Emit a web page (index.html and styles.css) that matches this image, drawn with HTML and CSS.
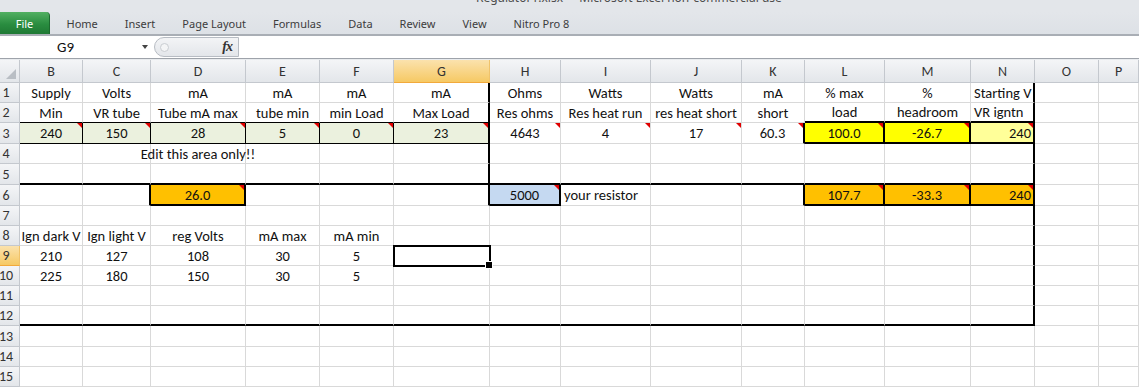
FILE: index.html
```html
<!DOCTYPE html>
<html lang="en">
<head>
  <meta charset="UTF-8" />
  <title>Regulator1.xlsx - Microsoft Excel non-commercial use</title>
  <link rel="stylesheet" href="styles.css">
</head>
<body>
  <div id="title-bar"><span>Regulator1.xlsx  -  Microsoft Excel non-commercial use</span></div>

  <div id="ribbon">
    <div class="tab file">File</div>
    <div class="tab first">Home</div>
    <div class="tab">Insert</div>
    <div class="tab">Page Layout</div>
    <div class="tab">Formulas</div>
    <div class="tab">Data</div>
    <div class="tab">Review</div>
    <div class="tab">View</div>
    <div class="tab">Nitro Pro 8</div>
  </div>

  <div id="formula-bar">
    <div class="name-box"><span>G9</span><span class="arrow"></span></div>
    <div class="fx-box"><span class="grip"></span><span class="fx">fx</span></div>
    <div class="formula"></div>
  </div>

  <div id="sheet">
    <!-- column headers -->
    <div class="corner"></div>
    <div class="ch">B</div><div class="ch">C</div><div class="ch">D</div><div class="ch">E</div>
    <div class="ch">F</div><div class="ch hl">G</div><div class="ch">H</div><div class="ch">I</div>
    <div class="ch">J</div><div class="ch">K</div><div class="ch">L</div><div class="ch">M</div>
    <div class="ch">N</div><div class="ch">O</div><div class="ch">P</div>

    <!-- row 1 -->
    <div class="rh">1</div>
    <div>Supply</div><div>Volts</div><div>mA</div><div>mA</div><div>mA</div><div class="tr">mA</div>
    <div>Ohms</div><div>Watts</div><div>Watts</div><div>mA</div><div>% max</div><div>%</div>
    <div class="tr left">Starting V</div><div></div><div></div>

    <!-- row 2 -->
    <div class="rh">2</div>
    <div class="kb">Min</div><div class="kb">VR tube</div><div class="kb">Tube mA max</div>
    <div class="kb">tube min</div><div class="kb">min Load</div><div class="kb tr">Max Load</div>
    <div>Res ohms</div><div>Res heat run</div><div>res heat short</div><div>short</div>
    <div class="tb">load</div><div class="tb">headroom</div><div class="tb tr left">VR igntn</div>
    <div></div><div></div>

    <!-- row 3 -->
    <div class="rh">3</div>
    <div class="green kb kr cm">240</div><div class="green kb kr cm">150</div>
    <div class="green kb kr cm">28</div><div class="green kb kr cm">5</div>
    <div class="green kb kr cm">0</div><div class="green kb tr cm">23</div>
    <div class="cm">4643</div><div class="cm">4</div><div class="cm">17</div><div class="tr cm">60.3</div>
    <div class="yellow tb tr cm">100.0</div><div class="yellow tb tr cm">-26.7</div>
    <div class="pale tb tr cm right">240</div><div></div><div></div>

    <!-- row 4 -->
    <div class="rh">4</div>
    <div></div><div></div><div>Edit this area only!!</div><div></div><div></div><div class="tr"></div>
    <div></div><div></div><div></div><div></div><div></div><div></div><div class="tr"></div>
    <div></div><div></div>

    <!-- row 5 -->
    <div class="rh">5</div>
    <div class="tb"></div><div class="tb"></div><div class="tb"></div><div class="tb"></div>
    <div class="tb"></div><div class="tb tr"></div><div class="tb"></div><div class="tb"></div>
    <div class="tb"></div><div class="tb"></div><div class="tb"></div><div class="tb"></div>
    <div class="tb tr"></div><div></div><div></div>

    <!-- row 6 -->
    <div class="rh">6</div>
    <div></div><div class="tr"></div><div class="orange tb tr cm">26.0</div><div></div><div></div>
    <div class="tr"></div><div class="blue tb tr cm">5000</div><div class="left">your resistor</div>
    <div></div><div class="tr"></div>
    <div class="orange tb tr cm">107.7</div><div class="orange tb tr cm">-33.3</div>
    <div class="orange tb tr cm right">240</div><div></div><div></div>

    <!-- row 7 -->
    <div class="rh">7</div>
    <div></div><div></div><div></div><div></div><div></div><div></div><div></div>
    <div></div><div></div><div></div><div></div><div></div><div class="tr"></div>
    <div></div><div></div>

    <!-- row 8 -->
    <div class="rh">8</div>
    <div>Ign dark V</div><div>Ign light V</div><div>reg Volts</div><div>mA max</div><div>mA min</div>
    <div></div><div></div><div></div><div></div><div></div><div></div><div></div><div class="tr"></div>
    <div></div><div></div>

    <!-- row 9 -->
    <div class="rh hl">9</div>
    <div>210</div><div>127</div><div>108</div><div>30</div><div>5</div><div class="sel"></div>
    <div></div><div></div><div></div><div></div><div></div><div></div><div class="tr"></div>
    <div></div><div></div>

    <!-- row 10 -->
    <div class="rh">10</div>
    <div>225</div><div>180</div><div>150</div><div>30</div><div>5</div><div></div>
    <div></div><div></div><div></div><div></div><div></div><div></div><div class="tr"></div>
    <div></div><div></div>

    <!-- row 11 -->
    <div class="rh">11</div>
    <div></div><div></div><div></div><div></div><div></div><div></div><div></div>
    <div></div><div></div><div></div><div></div><div></div><div class="tr"></div>
    <div></div><div></div>

    <!-- row 12 -->
    <div class="rh">12</div>
    <div class="tb"></div><div class="tb"></div><div class="tb"></div><div class="tb"></div>
    <div class="tb"></div><div class="tb"></div><div class="tb"></div><div class="tb"></div>
    <div class="tb"></div><div class="tb"></div><div class="tb"></div><div class="tb"></div>
    <div class="tb tr"></div><div></div><div></div>

    <!-- rows 13-15 -->
    <div class="rh">13</div>
    <div></div><div></div><div></div><div></div><div></div><div></div><div></div>
    <div></div><div></div><div></div><div></div><div></div><div></div><div></div><div></div>
    <div class="rh">14</div>
    <div></div><div></div><div></div><div></div><div></div><div></div><div></div>
    <div></div><div></div><div></div><div></div><div></div><div></div><div></div><div></div>
    <div class="rh">15</div>
    <div></div><div></div><div></div><div></div><div></div><div></div><div></div>
    <div></div><div></div><div></div><div></div><div></div><div></div><div></div><div></div>
  </div>
</body>
</html>
```

FILE: styles.css
```css
* {
  box-sizing: border-box;
}

body {
  margin: 0;
  width: 1139px;
  height: 389px;
  overflow: hidden;
  background: #fff;
  font-family: Carlito, Lato, "Liberation Sans", sans-serif;
  color: #111;
}

/* window chrome */
#title-bar {
  height: 12px;
  overflow: hidden;
  background: #e3e6ea;
  padding-left: 476px;
  font: 12px "Noto Sans", sans-serif;
  color: #4d4d4d;
  white-space: pre;
}

#title-bar span {
  display: block;
  margin-top: -11px;
  line-height: 17px;
}

#ribbon {
  display: flex;
  height: 24px;
  background: linear-gradient(#e3e6ea, #dde1e6);
  border-bottom: 2px solid #a9aeb5;
  font: 11px "Noto Sans", sans-serif;
  color: #3c3c3c;
}

.tab {
  display: flex;
  align-items: center;
  padding: 0 13.5px;
}

.tab.first {
  margin-left: 3px;
}

.tab.file {
  width: 50px;
  justify-content: center;
  padding: 0;
  background: linear-gradient(#52b062, #2a8d40 55%, #1f7934);
  color: #fff;
  border-radius: 0 4px 0 0;
  border-right: 1px solid #1c6a2e;
}

#formula-bar {
  display: flex;
  height: 23px;
  background: #fff;
  border-bottom: 1px solid #9ea3aa;
}

.name-box {
  width: 154px;
  display: flex;
  align-items: center;
  padding-left: 57px;
  font-size: 15px;
}

.name-box .arrow {
  margin-left: 68px;
  border-top: 4px solid #444;
  border-left: 3px solid transparent;
  border-right: 3px solid transparent;
}

.fx-box {
  width: 85px;
  display: flex;
  align-items: center;
  justify-content: space-between;
  padding: 0 6px 0 5px;
  margin: 1px 0;
  background: linear-gradient(#f3f4f6, #e3e6ea);
  border: 1px solid #b7bcc3;
  border-radius: 11px 0 0 11px;
}

.fx-box .grip {
  width: 9px;
  height: 9px;
  border-radius: 50%;
  background: #f4f5f6;
  border: 1px solid #c9cdd2;
}

.fx-box .fx {
  font: italic bold 14px "Liberation Serif", serif;
  color: #333;
  letter-spacing: -1px;
}

.formula {
  flex: 1;
}

/* grid of cells */
#sheet {
  display: grid;
  grid-template-columns: 20px 63px 68px 95px 74px 74px 96px 71px 90px 91px 63px 80px 86px 64px 64px 1fr;
  grid-template-rows: 23px 20px 20px 21px 20px 21px 21px 20px 20px 20px 20px 20px 20px 21px 20px 20px;
  border-top: 1px solid #e8ebee;
  font-size: 14.5px;
}

#sheet > div {
  position: relative;
  display: flex;
  align-items: center;
  justify-content: center;
  padding: 0 2px;
  min-width: 0;
  white-space: nowrap;
  border-right: 1px solid #d9d9d9;
  border-bottom: 1px solid #d9d9d9;
}

#sheet > .ch,
#sheet > .rh,
#sheet > .corner {
  background: linear-gradient(#f4f5f7, #e3e6ea);
  border-right-color: #c4c8ce;
  border-bottom-color: #c4c8ce;
  color: #333;
  font-size: 14px;
}

#sheet > .rh {
  padding: 0 7px 0 0;
}

#sheet > .corner::after {
  content: '';
  position: absolute;
  right: 3px;
  bottom: 3px;
  border-bottom: 10px solid #b9bec4;
  border-left: 10px solid transparent;
}

#sheet > .hl {
  background: linear-gradient(#fbe2ad, #f6c964);
  border-bottom-color: #f2a93b;
  border-right-color: #f0c36b;
}

#sheet > .left {
  justify-content: flex-start;
  padding-left: 3px;
}

#sheet > .right {
  justify-content: flex-end;
}

/* fills */
.green { background: #ebf1de; }
.yellow { background: #ffff00; }
.pale { background: #ffff99; }
.orange { background: #ffc000; }
.blue { background: #c5d9f1; }

/* cell borders */
#sheet > .kb { border-bottom-color: #000; }
#sheet > .kr { border-right-color: #000; }
#sheet > .tb { border-bottom: 2px solid #000; }
#sheet > .tr { border-right: 2px solid #000; }

/* comment marker */
.cm::before {
  content: '';
  position: absolute;
  top: 0;
  right: 0;
  border-top: 5px solid #e00000;
  border-left: 5px solid transparent;
}

/* active cell */
#sheet > .sel {
  z-index: 1;
  outline: 2px solid #000;
  outline-offset: -1px;
}

.sel::after {
  content: '';
  position: absolute;
  right: -4px;
  bottom: -4px;
  width: 6px;
  height: 6px;
  background: #000;
  border: 1px solid #fff;
}
```
